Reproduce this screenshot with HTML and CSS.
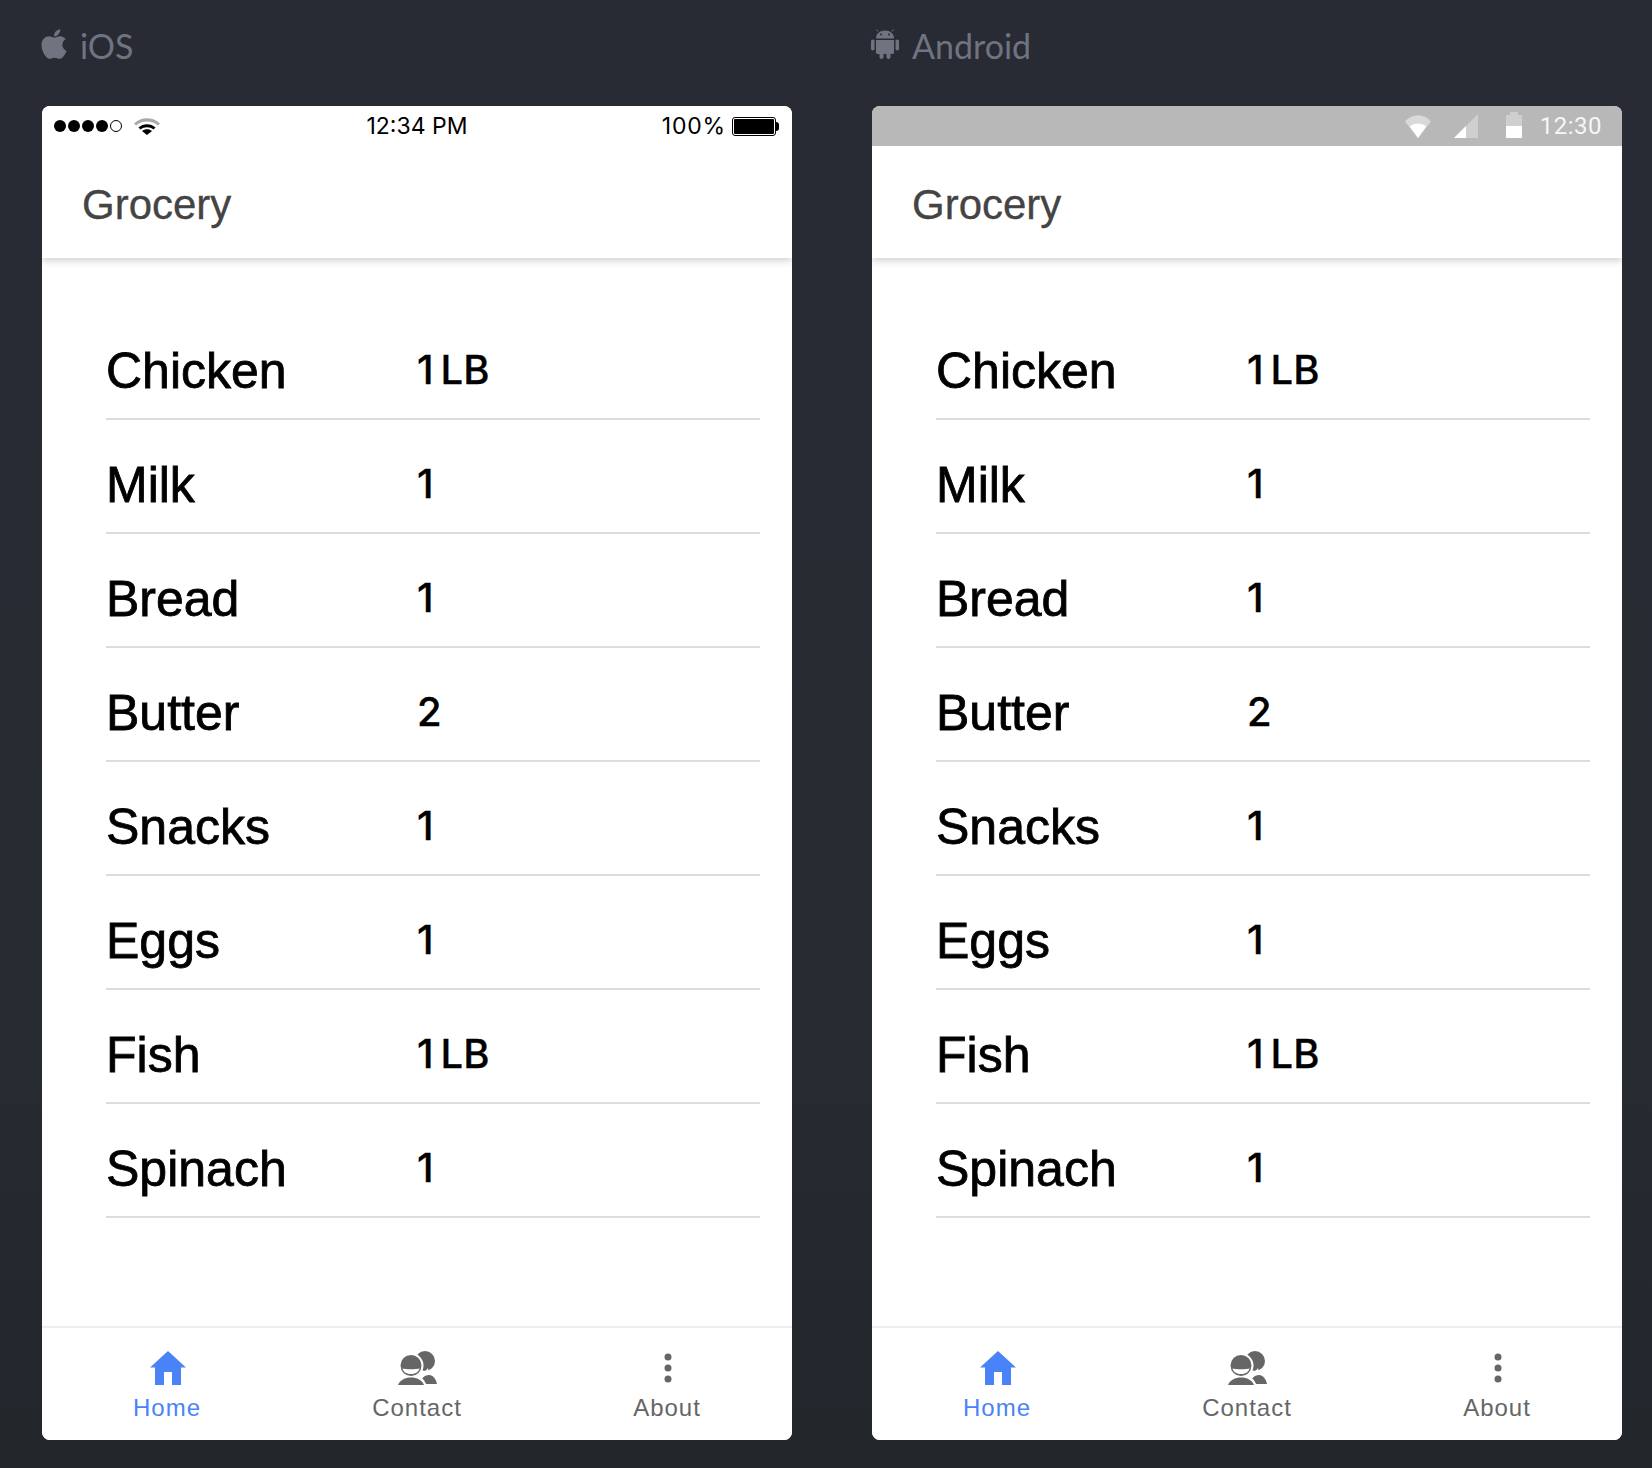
FILE: index.html
```html
<!DOCTYPE html>
<html lang="en">
<head>
<meta charset="utf-8">
<title>Grocery</title>
<link rel="stylesheet" href="styles.css">
</head>
<body>
<svg class="defs" width="0" height="0" aria-hidden="true">
  <symbol id="i-home" viewBox="0 0 36 34"><path d="M18 0 36 16.500H31V34H22V21H14V34H5V16.500H0Z"/></symbol>
  <symbol id="i-contact" viewBox="0 0 40 34">
    <circle cx="28" cy="10" r="10"/>
    <path d="M23 33C24 27 28 24 32 24 36 24 39 28 40 33Z"/>
    <circle cx="14" cy="14.500" r="12.500" fill="#fff"/>
    <path d="M0 34C2 28 8 25.500 14 25.500 20 25.500 26 28 28 34Z" fill="#fff" stroke="#fff" stroke-width="3"/>
    <circle cx="14" cy="14.500" r="10.500"/>
    <path d="M5.500 17.500C8 18.500 20 18.500 22.500 17.500 21.500 21.500 18 23 14 23 10 23 6.500 21.500 5.500 17.500Z" fill="#fff"/>
    <path d="M1 34C3 29 8 26.500 14 26.500 20 26.500 25 29 27 34Z"/>
    <path d="M24 24.500C27 23 33 21.500 31 17 30 19.500 27 20.500 24 20.500Z" fill="#fff"/>
  </symbol>
  <symbol id="i-more" viewBox="0 0 8 30"><circle cx="4" cy="4" r="3.500"/><circle cx="4" cy="15" r="3.500"/><circle cx="4" cy="26" r="3.500"/></symbol>
</svg>

<main class="stage">
  <section class="device">
    <h2 class="platform">
      <svg class="platform-icon" viewBox="0 0 384 512"><path d="M318.7 268.7c-.2-36.700 16.400-64.400 50-84.800-18.800-26.900-47.200-41.700-84.700-44.600-35.500-2.800-74.300 20.700-88.500 20.700-15 0-49.400-19.700-76.400-19.700C63.300 141.200 4 184.800 4 273.500q0 39.300 14.400 81.200c12.800 36.700 59 126.700 107.200 125.200 25.200-.6 43-17.900 75.800-17.900 31.800 0 48.300 17.900 76.400 17.900 48.600-.7 90.400-82.500 102.600-119.300-65.200-30.700-61.700-90-61.700-91.900zm-56.600-164.200c27.300-32.400 24.800-61.900 24-72.500-24.100 1.400-52 16.400-67.900 34.900-17.500 19.800-27.800 44.300-25.600 71.900 26.100 2 49.900-11.400 69.500-34.300z"/></svg>
      <span class="platform-label">iOS</span>
    </h2>
    <div class="phone">
      <div class="status status-ios">
        <div class="status-left">
          <span class="signal"><i></i><i></i><i></i><i></i><i class="empty"></i></span>
          <svg class="ios-wifi" viewBox="0 0 26 17">
            <path d="M0 5.500C7 -1.500 19 -1.500 26 5.500L24 7.500C18 2 8 2 2 7.500Z" fill="#a9a9a9"/>
            <path d="M4.500 9.500C9 5 17 5 21.500 9.500L19.500 11.500C16 8.500 10 8.500 6.500 11.500Z"/>
            <path d="M8 13C11 10.800 15 10.800 18 13L13 17Z"/>
          </svg>
        </div>
        <div class="status-time">12:34 PM</div>
        <div class="status-right">
          <span class="percent">100%</span>
          <span class="battery"><b></b></span>
        </div>
      </div>
      <header class="bar"><h1>Grocery</h1></header>
      <ul class="list">
        <li><span class="name">Chicken</span><span class="qty">1<span class="unit">LB</span></span></li>
        <li><span class="name">Milk</span><span class="qty">1</span></li>
        <li><span class="name">Bread</span><span class="qty">1</span></li>
        <li><span class="name">Butter</span><span class="qty">2</span></li>
        <li><span class="name">Snacks</span><span class="qty">1</span></li>
        <li><span class="name">Eggs</span><span class="qty">1</span></li>
        <li><span class="name">Fish</span><span class="qty">1<span class="unit">LB</span></span></li>
        <li><span class="name">Spinach</span><span class="qty">1</span></li>
      </ul>
      <nav class="tabs">
        <a class="tab active"><svg class="tab-icon home"><use href="#i-home"/></svg><span>Home</span></a>
        <a class="tab"><svg class="tab-icon contact"><use href="#i-contact"/></svg><span>Contact</span></a>
        <a class="tab"><svg class="tab-icon more"><use href="#i-more"/></svg><span>About</span></a>
      </nav>
    </div>
  </section>

  <section class="device">
    <h2 class="platform">
      <svg class="platform-icon android" viewBox="0 0 28 30">
        <path d="M7 2.500 5.500 .5M21 2.500 22.500 .5" stroke="#6f7480" stroke-width="1" fill="none"/>
        <path d="M5 9.500C5 4.500 9 1.500 14 1.500S23 4.500 23 9.500Z"/>
        <path d="M5 11H23V23.500A1.500 1.500 0 0 1 21.500 25H6.500A1.500 1.500 0 0 1 5 23.500Z"/>
        <rect x="0" y="10.500" width="3.500" height="11" rx="1.750"/>
        <rect x="24.500" y="10.500" width="3.500" height="11" rx="1.750"/>
        <rect x="8.500" y="23" width="4" height="7" rx="2"/>
        <rect x="15.500" y="23" width="4" height="7" rx="2"/>
        <circle cx="10" cy="5.500" r="1" fill="#272b33"/><circle cx="18" cy="5.500" r="1" fill="#272b33"/>
      </svg>
      <span class="platform-label">Android</span>
    </h2>
    <div class="phone">
      <div class="status status-android">
        <svg class="a-wifi" viewBox="0 0 26 23">
          <path d="M0 6.500C7 -2 19 -2 26 6.500L13 23Z" fill="#d9d9d9"/>
          <path d="M4.800 11.500C9 7.500 17 7.500 21.200 11.500L13 23Z" fill="#fff"/>
        </svg>
        <svg class="a-signal" viewBox="0 0 24 24">
          <path d="M24 0V24H0Z" fill="#cfcfcf"/>
          <path d="M12 12V24H0Z" fill="#fff"/>
        </svg>
        <svg class="a-battery" viewBox="0 0 16 26">
          <path d="M0 3H4V0H12V3H16V26H0Z" fill="#cfcfcf"/>
          <rect x="0" y="14" width="16" height="12" fill="#fff"/>
        </svg>
        <span class="a-time">12:30</span>
      </div>
      <header class="bar"><h1>Grocery</h1></header>
      <ul class="list">
        <li><span class="name">Chicken</span><span class="qty">1<span class="unit">LB</span></span></li>
        <li><span class="name">Milk</span><span class="qty">1</span></li>
        <li><span class="name">Bread</span><span class="qty">1</span></li>
        <li><span class="name">Butter</span><span class="qty">2</span></li>
        <li><span class="name">Snacks</span><span class="qty">1</span></li>
        <li><span class="name">Eggs</span><span class="qty">1</span></li>
        <li><span class="name">Fish</span><span class="qty">1<span class="unit">LB</span></span></li>
        <li><span class="name">Spinach</span><span class="qty">1</span></li>
      </ul>
      <nav class="tabs">
        <a class="tab active"><svg class="tab-icon home"><use href="#i-home"/></svg><span>Home</span></a>
        <a class="tab"><svg class="tab-icon contact"><use href="#i-contact"/></svg><span>Contact</span></a>
        <a class="tab"><svg class="tab-icon more"><use href="#i-more"/></svg><span>About</span></a>
      </nav>
    </div>
  </section>
</main>
</body>
</html>
```
FILE: styles.css
```css
* { box-sizing: border-box; }
html, body { margin: 0; padding: 0; }
body {
  width: 1652px;
  height: 1468px;
  background: linear-gradient(#282b33, #272b32 70%, #23272c);
  font-family: "Liberation Sans", Arial, sans-serif;
  overflow: hidden;
}
.defs { position: absolute; }
.stage {
  display: flex;
  gap: 80px;
  padding-left: 42px;
}
.device { width: 750px; }
.platform {
  height: 106px;
  margin: 0;
  padding-bottom: 18px;
  display: flex;
  align-items: center;
  gap: 13px;
  font-family: Lato, sans-serif;
  font-weight: 400;
  font-size: 34px;
  color: #6f7480;
}
.platform-label { margin-top: 2px; }
.platform-icon { width: 26px; height: 34px; fill: #6f7480; margin-left: -1px; flex: none; }
.platform-icon.android { width: 28px; height: 30px; }

.phone {
  height: 1334px;
  background: #fff;
  border-radius: 8px;
  overflow: hidden;
  display: flex;
  flex-direction: column;
}
.status { height: 40px; flex: none; display: flex; align-items: center; position: relative; z-index: 2; }
.status-ios {
  padding: 0 16px 0 12px;
  justify-content: space-between;
  font-family: Inter, "Liberation Sans", sans-serif;
  font-size: 23px;
  color: #000;
  background: #fff;
}
.status-left { display: flex; align-items: center; gap: 12px; width: 204px; }
.signal { display: flex; gap: 2px; }
.signal i { width: 12px; height: 12px; background: #000; border-radius: 50%; }
.signal i.empty { background: #fff; border: 1px solid #000; }
.ios-wifi { width: 26px; height: 17px; margin-top: 1px; }
.status-right { display: flex; align-items: center; gap: 6px; width: 200px; justify-content: flex-end; }
.percent { letter-spacing: .8px; }
.battery {
  width: 44px;
  height: 19px;
  border: 1px solid #000;
  border-radius: 3px;
  padding: 1px;
  display: block;
  position: relative;
}
.battery b { display: block; width: 100%; height: 100%; background: #000; border-radius: 1px; }
.battery::after {
  content: "";
  position: absolute;
  right: -4px;
  top: 4px;
  width: 3px;
  height: 9px;
  background: #000;
  border-radius: 0 3px 3px 0;
}
.status-android {
  background: #b8b8b8;
  justify-content: flex-end;
  padding-right: 20px;
  font-family: Roboto, sans-serif;
  color: rgba(255, 255, 255, .9);
  font-size: 24px;
  letter-spacing: .5px;
}
.a-wifi { width: 26px; height: 23px; margin-right: 23px; }
.a-signal { width: 24px; height: 24px; margin-right: 28px; }
.a-battery { width: 16px; height: 26px; margin-right: 18px; margin-bottom: 2px; }

.bar {
  height: 112px;
  flex: none;
  padding: 6px 0 0 40px;
  display: flex;
  align-items: center;
  background: #fff;
  box-shadow: 0 2px 8px rgba(0, 0, 0, .22);
  position: relative;
  z-index: 1;
}
.bar h1 { margin: 0; font-size: 42px; font-weight: 400; color: #444; -webkit-text-stroke: .3px #444; }

.list {
  list-style: none;
  flex: 1;
  margin: 48px 32px 0 64px;
  padding: 0;
}
.list li {
  height: 114px;
  padding-top: 18px;
  border-bottom: 2px solid #ddd;
  display: flex;
  align-items: center;
  color: #000;
}
.name { width: 311px; font-size: 50px; -webkit-text-stroke: .8px #000; }
.qty { font-family: Inter, "Liberation Sans", sans-serif; font-weight: 500; font-size: 40px; margin-bottom: 4px; -webkit-text-stroke: .3px #000; }
.unit { margin-left: 7px; }

.tabs {
  height: 114px;
  flex: none;
  border-top: 2px solid #eee;
  display: grid;
  grid-template-columns: repeat(3, 250px);
  background: #fff;
}
.tab {
  display: flex;
  flex-direction: column;
  align-items: center;
  padding-top: 23px;
  color: #666;
  fill: #666;
  font-size: 24px;
  letter-spacing: 1px;
}
.tab.active { color: #4a83f7; fill: #4a83f7; }
.tab-icon { height: 34px; width: 36px; display: block; margin: 0 0 9px 2px; }
.tab-icon.contact { width: 40px; margin-left: 0; }
.tab-icon.more { width: 8px; height: 30px; margin-top: 2px; margin-bottom: 11px; }
```
